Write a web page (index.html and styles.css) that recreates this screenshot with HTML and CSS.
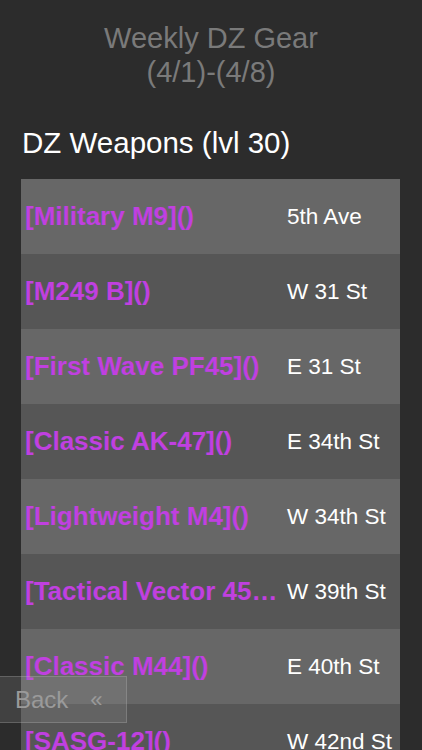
FILE: index.html
```html
<!DOCTYPE html>
<html>
<head>
<meta charset="utf-8">
<link rel="stylesheet" href="styles.css">
</head>
<body>
<div class="page">
  <div class="title">Weekly DZ Gear<br>(4/1)-(4/8)</div>
  <div class="heading">DZ Weapons (lvl 30)</div>
  <div class="table">
    <div class="row light"><div class="name">[Military M9]()</div><div class="loc">5th Ave</div></div>
    <div class="row dark"><div class="name">[M249 B]()</div><div class="loc">W 31 St</div></div>
    <div class="row light"><div class="name">[First Wave PF45]()</div><div class="loc">E 31 St</div></div>
    <div class="row dark"><div class="name">[Classic AK-47]()</div><div class="loc">E 34th St</div></div>
    <div class="row light"><div class="name">[Lightweight M4]()</div><div class="loc">W 34th St</div></div>
    <div class="row dark"><div class="name">[Tactical Vector 45 ACP]()</div><div class="loc">W 39th St</div></div>
    <div class="row light"><div class="name">[Classic M44]()</div><div class="loc">E 40th St</div></div>
    <div class="row dark"><div class="name">[SASG-12]()</div><div class="loc">W 42nd St</div></div>
  </div>
</div>
<div class="back"><span class="back-text">Back</span><span class="back-arrow">«</span></div>
</body>
</html>
```
FILE: styles.css
```css
html, body {
  margin: 0;
  padding: 0;
  background: #2c2c2c;
  height: 750px;
  overflow: hidden;
  font-family: "Liberation Sans", Arial, sans-serif;
}
.page {
  padding-top: 21px;
}
.title {
  text-align: center;
  color: #7a7a7a;
  font-size: 29px;
  line-height: 34px;
}
.heading {
  margin-top: 37px;
  margin-left: 22px;
  color: #ffffff;
  font-size: 29.5px;
  line-height: 34px;
}
.table {
  margin: 19px 22px 0 21px;
  display: flex;
  flex-direction: column;
}
.row {
  height: 75px;
  display: grid;
  grid-template-columns: 262px 1fr;
  align-items: center;
}
.light { background: #676767; }
.dark { background: #565656; }
.name {
  padding-left: 4px;
  color: #c040e0;
  font-size: 26px;
  font-weight: bold;
  white-space: nowrap;
  overflow: hidden;
  text-overflow: ellipsis;
}
.loc {
  padding-left: 4px;
  color: #ffffff;
  font-size: 22.5px;
  white-space: nowrap;
}
.back {
  position: absolute;
  left: -1px;
  top: 676px;
  width: 126px;
  height: 45px;
  border: 1px solid rgba(200,200,200,0.25);
  background: rgba(160,160,160,0.18);
  display: flex;
  align-items: center;
}
.back-text {
  margin-left: 15px;
  color: #9a9a9a;
  font-size: 24px;
}
.back-arrow {
  margin-left: 22px;
  color: #9a9a9a;
  font-size: 22px;
}
```
